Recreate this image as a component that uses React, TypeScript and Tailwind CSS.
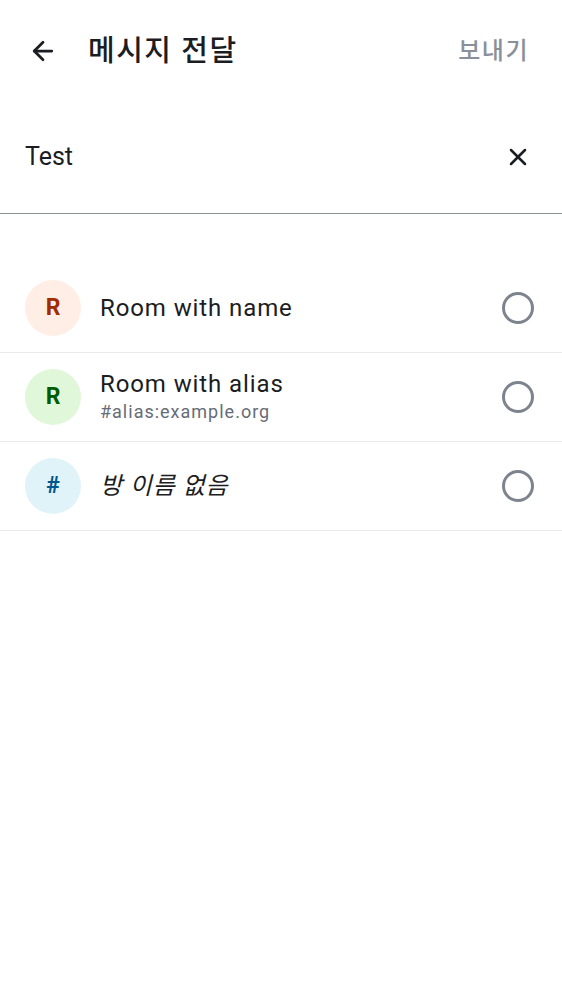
import { ArrowLeft, X } from 'lucide-react'

type Room = {
  id: string
  initial: string
  name: string
  alias?: string
  italic?: boolean
  bg: string
  fg: string
}

const rooms: Room[] = [
  { id: 'a', initial: 'R', name: 'Room with name', bg: 'bg-[#ffeee5]', fg: 'text-[#a02c00]' },
  { id: 'b', initial: 'R', name: 'Room with alias', alias: '#alias:example.org', bg: 'bg-[#e0f8d9]', fg: 'text-[#005c00]' },
  { id: 'c', initial: '#', name: '방 이름 없음', italic: true, bg: 'bg-[#e0f3f9]', fg: 'text-[#00558a]' },
]

export default function App() {
  return (
    <div
      className="min-h-screen w-full bg-white text-[#1b1d22]"
      style={{ fontFamily: 'Roboto, "Noto Sans CJK KR", sans-serif' }}
    >
      {/* Top bar */}
      <div className="flex h-[102px] items-center pl-[28px] pr-[33px]">
        <ArrowLeft size={30} strokeWidth={2.2} className="text-[#1b1d22]" />
        <h1 className="ml-[30px] flex-1 text-[29px] font-medium leading-none tracking-[1.5px]">메시지 전달</h1>
        <span className="text-[24px] font-medium tracking-[1.5px] text-[#8a9099]">보내기</span>
      </div>

      {/* Search field */}
      <div className="flex h-[112px] items-center border-b border-[#8e9196] pb-[2px] pl-[25px] pr-[30px]">
        <span className="flex-1 text-[25px]">Test</span>
        <X size={28} strokeWidth={2.2} className="text-[#1b1d22]" />
      </div>

      {/* Rooms */}
      <div className="mt-[50px] flex flex-col">
        {rooms.map(r => (
          <div key={r.id} className="flex h-[89px] items-center border-b border-[#ebebef] pl-[25px] pr-[28px]">
            <div className={`flex h-[56px] w-[56px] items-center justify-center rounded-full ${r.bg}`}>
              <span className={`text-[23px] font-bold ${r.fg}`}>{r.initial}</span>
            </div>
            <div className="ml-[19px] flex flex-1 flex-col">
              <span className={`text-[24px] leading-[30px] tracking-[0.9px] ${r.italic ? 'italic' : ''}`}>{r.name}</span>
              {r.alias && (
                <span className="text-[18px] leading-[26px] tracking-[1px] text-[#656c76]">{r.alias}</span>
              )}
            </div>
            <div className="h-[32px] w-[32px] rounded-full border-[3px] border-[#7d848e]" />
          </div>
        ))}
      </div>
    </div>
  )
}
